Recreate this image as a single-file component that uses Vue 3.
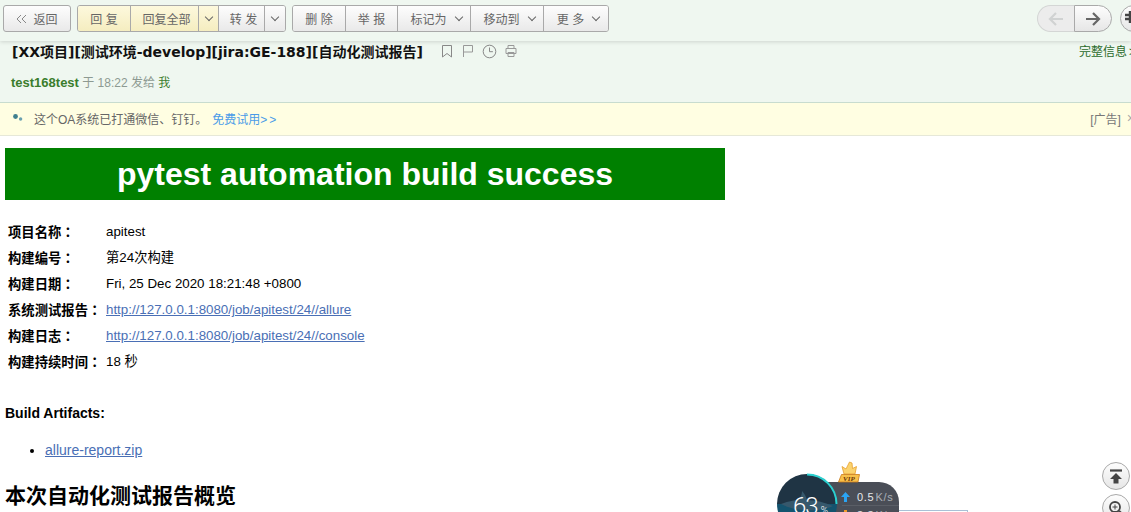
<template>
  <div class="page">
    <div class="toolbar">
      <button class="btn back"><span class="chev-l"></span>返回</button>
      <div class="group">
        <button class="btn warm reply">回 复</button>
        <button class="btn warm reply-all">回复全部</button>
        <button class="btn warm drop"><span class="caret"></span></button>
        <button class="btn forward">转 发</button>
        <button class="btn drop"><span class="caret"></span></button>
      </div>
      <div class="group">
        <button
          v-for="item in actions"
          :key="item.label"
          class="btn"
          :class="{ 'has-caret': item.caret }"
          :style="{ width: item.width + 'px' }"
        >
          {{ item.label }}<span v-if="item.caret" class="caret inline"></span>
        </button>
      </div>
      <div class="spacer"></div>
      <div class="nav">
        <button class="nav-btn prev">
          <svg width="16" height="14" viewBox="0 0 16 14"><path d="M15 7H2M8 1L2 7l6 6" fill="none" stroke="#d0d2d2" stroke-width="2.2" /></svg>
        </button>
        <button class="nav-btn next">
          <svg width="16" height="14" viewBox="0 0 16 14"><path d="M1 7h13M8 1l6 6-6 6" fill="none" stroke="#666" stroke-width="2.2" /></svg>
        </button>
      </div>
      <button class="round-btn">
        <svg width="12" height="14" viewBox="0 0 12 14"><path d="M6 1v12M1 5h10M1 9h10" fill="none" stroke="#444" stroke-width="2.4" /></svg>
      </button>
    </div>

    <div class="mail-head">
      <div class="subject-row">
        <h1 class="subject">[XX项目][测试环境-develop][jira:GE-188][自动化测试报告]</h1>
        <div class="subject-icons">
          <svg width="14" height="14" viewBox="0 0 14 14"><path d="M2.5 1.5h9v11.500L7 9.500 2.500 13z" fill="none" stroke="#888" /></svg>
          <svg width="14" height="14" viewBox="0 0 14 14"><path d="M2.500 13V1.500h9v6.500h-9" fill="none" stroke="#999" /></svg>
          <svg width="15" height="15" viewBox="0 0 15 15"><circle cx="7.500" cy="7.500" r="6.300" fill="none" stroke="#888" /><path d="M7.500 3.500v4.200h3.400" fill="none" stroke="#888" /></svg>
          <svg width="14" height="14" viewBox="0 0 14 14"><path d="M4 4V1.500h6V4M2 4.500h10v5H2zM4 8.500h6v4H4z" fill="none" stroke="#999" /></svg>
        </div>
        <span class="full-info">完整信息<span class="more">&gt;</span></span>
      </div>
      <div class="sender">
        <b>test168test</b> <span class="muted">于 18:22 发给</span> <span class="me">我</span>
      </div>
    </div>

    <div class="ad-bar">
      <svg class="ad-icon" width="12" height="10" viewBox="0 0 12 10">
        <circle cx="3.500" cy="3.500" r="2.400" fill="#3f7f8f" />
        <circle cx="8.600" cy="6" r="1.700" fill="#6aa0b0" />
      </svg>
      <span>这个OA系统已打通微信、钉钉。</span>
      <a class="ad-link">免费试用<span class="arrows">&gt;&gt;</span></a>
      <span class="spacer"></span>
      <span class="ad-tag">[广告]</span>
      <span class="ad-close">×</span>
    </div>

    <div class="content">
      <div class="banner">pytest automation build success</div>
      <div class="info-table">
        <template v-for="row in rows" :key="row.label">
          <b class="label">{{ row.label }}<span class="colon">：</span></b>
          <a v-if="row.link" class="link">{{ row.value }}</a>
          <span v-else>{{ row.value }}</span>
        </template>
      </div>
      <b class="artifacts">Build Artifacts:</b>
      <ul class="files">
        <li><a class="link">allure-report.zip</a></li>
      </ul>
      <h2 class="overview">本次自动化测试报告概览</h2>
    </div>

    <div class="speed-box"></div>
    <div class="speed-pill">
      <div class="speed-row">
        <svg class="speed-arrow" width="9" height="10" viewBox="0 0 9 10"><path d="M4.500 0L9 5H6v5H3V5H0z" fill="#2aa4f4" /></svg>
        0.5<i>K/s</i>
      </div>
      <div class="speed-row">
        <svg class="speed-arrow" width="9" height="10" viewBox="0 0 9 10"><path d="M4.500 10L0 5h3V0h3v5h3z" fill="#f09a2a" /></svg>
        3.3<i>K/s</i>
      </div>
    </div>
    <div class="speed-circle">
      <svg class="whale" width="60" height="60" viewBox="0 0 60 60">
        <path d="M4 30c8-3 14-4 18-4 2-3 3-6 3-9 3 3 4 6 5 9 8 0 17 2 26 6-9 4-18 5-27 4-9 0-17-2-25-6z" fill="#36586c" />
      </svg>
      <svg class="ring" width="62" height="62" viewBox="0 0 62 62">
        <path d="M31 1.500A29.500 29.500 0 0 1 60.500 31" fill="none" stroke="#2bd0d0" stroke-width="2" />
      </svg>
      <span class="percent">63<small>%</small></span>
    </div>
    <svg class="vip" width="23" height="22" viewBox="0 0 23 22">
      <path d="M6 13L4 5.500l4 2.500 3.500-7 2.500 1 .5 5.500 4-2-1.500 7.500z" fill="#fbd36e" stroke="#e6a030" stroke-width=".8" />
      <path d="M3.500 13.500h18L20 21H.5z" fill="#f8c04a" stroke="#c97a1a" stroke-width=".8" />
      <text x="5" y="19.500" font-size="7" font-weight="700" font-style="italic" fill="#6b3606" font-family="Liberation Serif, serif">VIP</text>
    </svg>
    <button class="side-btn top">
      <svg width="14" height="15" viewBox="0 0 14 15"><path d="M1 1.500h12" stroke="#444" stroke-width="2.200" /><path d="M7 4l6 6H9.500v4.500h-5V10H1z" fill="#444" /></svg>
    </button>
    <button class="side-btn zoom">
      <svg width="16" height="16" viewBox="0 0 16 16"><circle cx="7" cy="7" r="5" fill="none" stroke="#444" stroke-width="1.800" /><path d="M11 11l4 4" stroke="#444" stroke-width="2.400" /><path d="M4.500 7h5M7 4.500v5" stroke="#444" /></svg>
    </button>
  </div>
</template>

<script setup>
const actions = [
  { label: '删 除', width: 53 },
  { label: '举 报', width: 52 },
  { label: '标记为', width: 73, caret: true },
  { label: '移动到', width: 73, caret: true },
  { label: '更 多', width: 64, caret: true },
]

const rows = [
  { label: '项目名称', value: 'apitest' },
  { label: '构建编号', value: '第24次构建' },
  { label: '构建日期', value: 'Fri, 25 Dec 2020 18:21:48 +0800' },
  { label: '系统测试报告', value: 'http://127.0.0.1:8080/job/apitest/24//allure', link: true },
  { label: '构建日志', value: 'http://127.0.0.1:8080/job/apitest/24//console', link: true },
  { label: '构建持续时间', value: '18 秒' },
]
</script>

<style>
html,
body {
  margin: 0;
  overflow: hidden;
  background: #fff;
}
</style>

<style scoped>
.page {
  position: relative;
  width: 1131px;
  height: 512px;
  overflow: hidden;
  font-family: "Liberation Sans", "Noto Sans CJK SC", sans-serif;
  font-size: 12px;
  color: #000;
}

.toolbar {
  display: flex;
  align-items: flex-start;
  gap: 6px;
  height: 41px;
  box-sizing: border-box;
  padding: 5px 0 0 3px;
  background: #eff7f0;
  box-shadow: 0 1px 4px rgba(0, 0, 0, 0.14);
  position: relative;
}

.spacer { flex: 1; }

.btn {
  height: 27px;
  box-sizing: border-box;
  padding: 0;
  display: flex;
  align-items: center;
  justify-content: center;
  border: 0;
  border-right: 1px solid #a9a9a9;
  background: linear-gradient(#fdfdfd, #e9e9e9);
  color: #666;
  font: inherit;
}

.btn:last-child { border-right: 0; }
.has-caret { padding-left: 4px; }

.back {
  width: 68px;
  border: 1px solid #a9a9a9;
  border-radius: 3px;
}

.chev-l {
  width: 12px;
  height: 8px;
  margin-right: 5px;
  background:
    linear-gradient(45deg, transparent 46%, #888 46%, #888 56%, transparent 56%) 0 4px / 6px 4px no-repeat,
    linear-gradient(135deg, transparent 46%, #888 46%, #888 56%, transparent 56%) 0 0 / 6px 4px no-repeat,
    linear-gradient(45deg, transparent 46%, #888 46%, #888 56%, transparent 56%) 5px 4px / 6px 4px no-repeat,
    linear-gradient(135deg, transparent 46%, #888 46%, #888 56%, transparent 56%) 5px 0 / 6px 4px no-repeat;
}

.group {
  display: flex;
  border: 1px solid #a9a9a9;
  border-radius: 3px;
  overflow: hidden;
}

.group .btn { height: 25px; }

.warm { background: linear-gradient(#fdf9dd, #f5edc0); }
.reply { width: 53px; }
.reply-all { width: 68px; padding-left: 4px; }
.drop { width: 20px; }
.forward { width: 46px; padding-left: 4px; }

.caret {
  width: 5px;
  height: 5px;
  margin-top: -3px;
  border-right: 1px solid #666;
  border-bottom: 1px solid #666;
  transform: rotate(45deg);
}

.caret.inline { margin-left: 9px; }

.nav {
  display: flex;
  width: 75px;
  height: 27px;
  margin-right: 2px;
}

.nav-btn {
  flex: 1;
  padding: 0;
  border: 1px solid #a9a9a9;
  display: flex;
  align-items: center;
  justify-content: center;
}

.prev {
  border-color: #d4d6d5;
  border-right: 0;
  border-radius: 14px 0 0 14px;
  background: #ececec;
}

.next {
  border-radius: 0 14px 14px 0;
  background: linear-gradient(#fdfdfd, #e6e6e6);
}

.round-btn {
  flex: none;
  width: 27px;
  height: 27px;
  margin-right: -16px;
  padding: 0;
  border: 1px solid #a9a9a9;
  border-radius: 50%;
  background: linear-gradient(#fdfdfd, #e6e6e6);
  text-align: left;
  padding-left: 3px;
}

.mail-head {
  height: 62px;
  box-sizing: border-box;
  padding: 0 0 0 12px;
  background: #eff7f0;
  border-bottom: 1px solid #c8dccf;
}

.subject-row {
  display: flex;
  align-items: center;
  height: 20px;
}

.subject {
  margin: 0;
  font-size: 14px;
  font-weight: 700;
  color: #111;
  font-family: "DejaVu Sans", "Noto Sans CJK SC", sans-serif;
}

.subject-icons {
  display: flex;
  align-items: center;
  gap: 7px;
  margin-left: 17px;
}

.full-info {
  margin-left: auto;
  margin-top: -2px;
  margin-right: -5px;
  color: #2a6a2a;
}

.more {
  margin-left: 2px;
}

.sender {
  margin-top: 12px;
  margin-left: -1px;
}

.sender b {
  color: #3a7d2c;
  font-size: 13px;
}

.muted { color: #8d9a92; }
.me { color: #3a7d2c; }

.ad-bar {
  display: flex;
  align-items: center;
  height: 33px;
  padding: 0 0 2px 12px;
  background: #fffee2;
  border-bottom: 1px solid #e6e8d8;
  color: #666;
  box-sizing: border-box;
}

.ad-icon { margin-right: 10px; }
.ad-link { margin-left: 5px; color: #4a9be8; }
.arrows { letter-spacing: 2px; }
.ad-tag { color: #777; }
.ad-close { margin-left: 6px; margin-right: -4px; color: #aaa; font-size: 14px; }

.content {
  padding: 12px 0 0 5px;
}

.banner {
  width: 720px;
  height: 52px;
  background: #008000;
  color: #fff;
  text-align: center;
  font-size: 32px;
  font-weight: 700;
  line-height: 52px;
}

.info-table {
  display: grid;
  grid-template-columns: 98px 1fr;
  grid-auto-rows: 26px;
  align-items: center;
  margin: 19px 0 0 3px;
  font-size: 13.33px;
  line-height: 16px;
}

.label { font-weight: 700; }
.colon { font-family: "Noto Sans CJK TC", sans-serif; }

.link {
  color: #4a6fb5;
  text-decoration: underline;
}

.artifacts {
  display: block;
  margin-top: 30px;
  font-size: 14px;
}

.files {
  margin: 21px 0 0;
  padding-left: 40px;
  font-size: 14px;
}

.overview {
  margin: 21px 0 0;
  font-size: 21px;
  font-weight: 700;
}

.speed-circle {
  position: absolute;
  left: 777px;
  top: 474px;
  width: 60px;
  height: 60px;
  border-radius: 50%;
  background: linear-gradient(#1f3444 50%, #14536e 50%);
  color: #fff;
}

.whale,
.ring {
  position: absolute;
  left: -1px;
  top: -1px;
}

.whale { left: 0; top: 0; }

.percent {
  position: absolute;
  left: 16px;
  top: 20px;
  font-family: Roboto, sans-serif;
  font-weight: 300;
  font-size: 24px;
  letter-spacing: -1px;
  line-height: 24px;
}

.percent small { font-size: 10px; margin-left: 3px; letter-spacing: 0; }

.speed-pill {
  position: absolute;
  left: 820px;
  top: 482px;
  width: 79px;
  height: 60px;
  padding: 6px 0 0 22px;
  box-sizing: border-box;
  border-radius: 0 20px 20px 0;
  background: #4a4e57;
  color: #e6e8ea;
  font-size: 11px;
  letter-spacing: .7px;
}

.speed-row {
  display: flex;
  align-items: center;
  height: 18px;
  box-sizing: border-box;
  border-bottom: 1px solid #5a5e66;
}

.speed-row i { font-style: normal; color: #aab0b6; margin-left: 1px; }
.speed-arrow { margin-right: 7px; margin-left: -1px; }

.speed-box {
  position: absolute;
  left: 880px;
  top: 510px;
  width: 86px;
  height: 20px;
  border: 1px solid #a9c0d6;
  background: #fff;
}

.vip {
  position: absolute;
  left: 838px;
  top: 461px;
}

.side-btn {
  position: absolute;
  left: 1102px;
  width: 28px;
  height: 28px;
  padding: 0;
  border: 1px solid #a9a9a9;
  border-radius: 50%;
  background: linear-gradient(#fdfdfd, #e6e6e6);
  display: flex;
  align-items: center;
  justify-content: center;
}

.side-btn.top { top: 462px; }
.side-btn.zoom { top: 494px; }
</style>
